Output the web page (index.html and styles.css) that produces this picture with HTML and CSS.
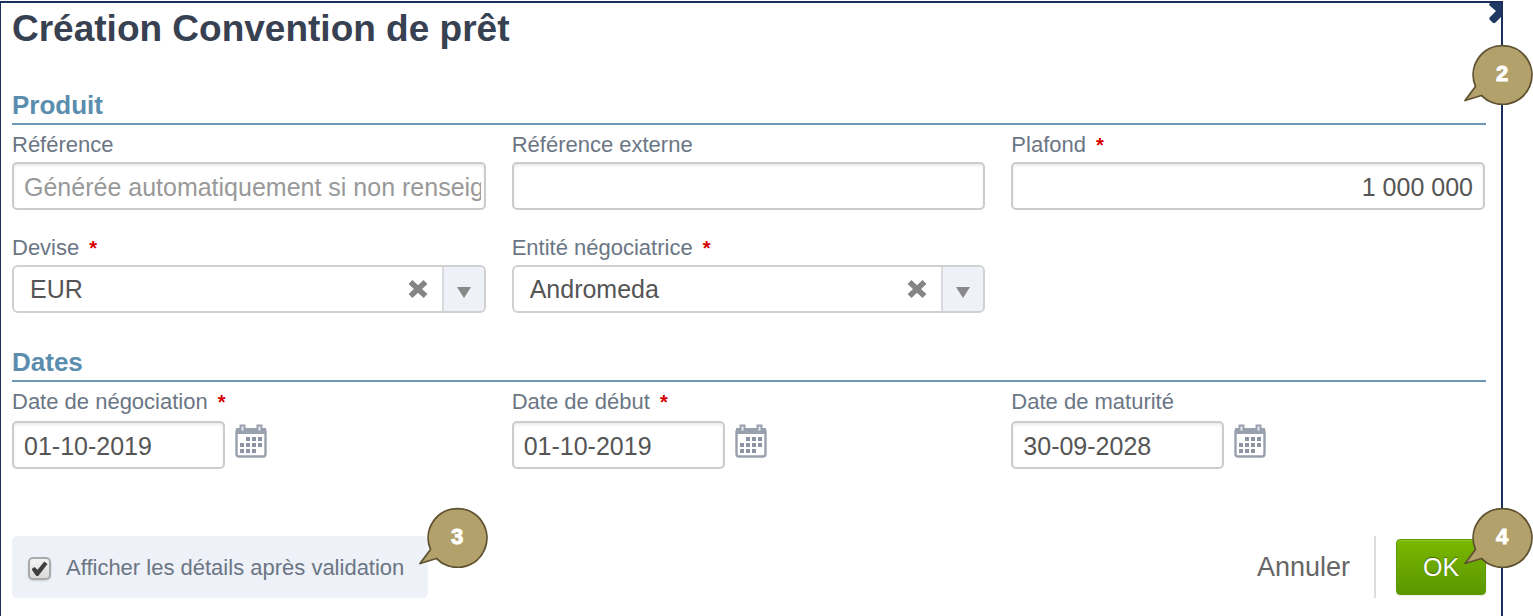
FILE: index.html
```html
<!DOCTYPE html>
<html lang="fr">
<head>
    <meta charset="UTF-8">
    <meta name="viewport" content="width=device-width, initial-scale=1.0">
    <title>Création Convention de prêt</title>
    <link rel="stylesheet" href="styles.css">
</head>
<body>

    <!-- Shared shapes -->
    <svg class="sprite" aria-hidden="true">
        <symbol id="callout" viewBox="0 0 69 62">
            <path d="M11.500 43.500 A29.400 29.400 0 1 1 17.500 52.500 L1 57.500 Z" fill="#b3a16c" stroke="#5f5230" stroke-width="1.8" stroke-linejoin="round"/>
        </symbol>
        <symbol id="calendar" viewBox="0 0 32 34">
            <rect x="1.500" y="5.500" width="29" height="27" rx="2.500" fill="#fff" stroke="#99a0ad" stroke-width="2.400"/>
            <path d="M1 4h30v6H1z" fill="#99a0ad"/>
            <path d="M4.500 0.500h6v7h-6zM21.500 0.500h6v7h-6z" fill="#99a0ad"/>
            <path d="M6.500 2.500h2v4h-2zM23.500 2.500h2v4h-2z" fill="#e6e9ef"/>
            <path d="M11 13h4v4h-4zM17 13h4v4h-4zM23 13h4v4h-4zM5 19h4v4H5zM11 19h4v4h-4zM17 19h4v4h-4zM23 19h4v4h-4zM5 25h4v4H5zM11 25h4v4h-4zM17 25h4v4h-4z" fill="#8d94a3"/>
        </symbol>
        <symbol id="clear" viewBox="0 0 20 20">
            <path d="M2.500 3 L17.500 17 M17.500 3 L2.500 17" stroke="#858585" stroke-width="5.600" fill="none"/>
        </symbol>
    </svg>

    <div class="dialog">
        <button type="button" class="dialog-close" aria-label="Fermer">
            <svg width="12" height="22" viewBox="0 0 12 22">
                <path d="M1 0 H12 V14 L6.500 19.500 Q5 21 3.500 19.500 L0.800 16.800 Q-0.300 15.500 0.800 14.200 L7 8 L0.500 2.500 Q-0.300 1 1 0 Z" fill="#1f3864"/>
            </svg>
        </button>
        <div class="callout callout-dialog">
            <svg><use href="#callout"/></svg>
            <span>2</span>
        </div>

        <h1>Création Convention de prêt</h1>

        <form>
            <section>
                <h2>Produit</h2>
                <div class="fields">
                    <div class="field">
                        <label for="reference">Référence</label>
                        <input type="text" id="reference" placeholder="Générée automatiquement si non renseignée">
                    </div>
                    <div class="field">
                        <label for="reference-externe">Référence externe</label>
                        <input type="text" id="reference-externe">
                    </div>
                    <div class="field">
                        <label for="plafond">Plafond <span class="required">*</span></label>
                        <input type="text" id="plafond" class="amount" value="1 000 000">
                    </div>
                    <div class="field">
                        <label for="devise">Devise <span class="required">*</span></label>
                        <div class="combo">
                            <select id="devise">
                                <option>EUR</option>
                            </select>
                            <button type="button" class="combo-clear" aria-label="Effacer"><svg><use href="#clear"/></svg></button>
                            <span class="combo-arrow"></span>
                        </div>
                    </div>
                    <div class="field">
                        <label for="entite">Entité négociatrice <span class="required">*</span></label>
                        <div class="combo">
                            <select id="entite">
                                <option>Andromeda</option>
                            </select>
                            <button type="button" class="combo-clear" aria-label="Effacer"><svg><use href="#clear"/></svg></button>
                            <span class="combo-arrow"></span>
                        </div>
                    </div>
                </div>
            </section>

            <section>
                <h2>Dates</h2>
                <div class="fields">
                    <div class="field">
                        <label for="date-negociation">Date de négociation <span class="required">*</span></label>
                        <div class="date">
                            <input type="text" id="date-negociation" value="01-10-2019">
                            <button type="button" aria-label="Calendrier"><svg><use href="#calendar"/></svg></button>
                        </div>
                    </div>
                    <div class="field">
                        <label for="date-debut">Date de début <span class="required">*</span></label>
                        <div class="date">
                            <input type="text" id="date-debut" value="01-10-2019">
                            <button type="button" aria-label="Calendrier"><svg><use href="#calendar"/></svg></button>
                        </div>
                    </div>
                    <div class="field">
                        <label for="date-maturite">Date de maturité</label>
                        <div class="date">
                            <input type="text" id="date-maturite" value="30-09-2028">
                            <button type="button" aria-label="Calendrier"><svg><use href="#calendar"/></svg></button>
                        </div>
                    </div>
                </div>
            </section>

            <div class="actions">
                <div class="details">
                    <input type="checkbox" id="details" checked>
                    <label for="details">Afficher les détails après validation</label>
                    <div class="callout callout-details">
                        <svg><use href="#callout"/></svg>
                        <span>3</span>
                    </div>
                </div>
                <div class="buttons">
                    <button type="button" class="cancel">Annuler</button>
                    <div class="submit">
                        <button type="submit" class="ok">OK</button>
                        <div class="callout callout-ok">
                            <svg><use href="#callout"/></svg>
                            <span>4</span>
                        </div>
                    </div>
                </div>
            </div>
        </form>
    </div>

</body>
</html>
```
FILE: styles.css
```css
* {
    box-sizing: border-box;
}
body {
    margin: 0;
    padding-top: 1px;
    background-color: #fff;
    font-family: 'Liberation Sans', Arial, Helvetica, sans-serif;
    font-size: 22px;
    color: #6b7685;
}
button, input, select {
    font-family: inherit;
}
button {
    margin: 0;
    padding: 0;
    border: none;
    background: none;
    cursor: pointer;
}
svg {
    display: block;
}
.sprite {
    position: absolute;
    width: 0;
    height: 0;
}

/* Dialog */
.dialog {
    position: relative;
    min-height: calc(100vh - 1px);
    margin-right: 30px;
    padding: 0 15px 0 11px;
    border: 2px solid #1a2f5a;
    border-left-width: 1px;
    border-bottom: none;
}
.dialog-close {
    position: absolute;
    top: 0;
    right: 0;
}
h1 {
    margin: 0 0 35px;
    font-size: 37px;
    line-height: 52px;
    color: #374151;
}
h2 {
    margin: 0;
    padding-bottom: 3px;
    border-bottom: 2px solid #6c98b5;
    font-size: 26px;
    line-height: 30px;
    color: #5b8dae;
}
section {
    margin-bottom: 34px;
}

/* Fields */
.fields {
    display: grid;
    grid-template-columns: repeat(3, 1fr);
    gap: 25px 26px;
    padding: 7px 1px 0 0;
}
.field label {
    display: block;
    margin-bottom: 4px;
    line-height: 26px;
}
.required {
    margin-left: 4px;
    font-size: 20px;
    font-weight: bold;
    color: #d60000;
}
.field input {
    display: block;
    width: 100%;
    height: 48px;
    padding: 3px 3px 0 10px;
    border: 2px solid #ccc;
    border-radius: 5px;
    background-color: #fff;
    box-shadow: inset 0 2px 3px rgba(0, 0, 0, 0.08);
    font-size: 25px;
    color: #555;
}
.field input::placeholder {
    color: #999;
}
.field .amount {
    padding-right: 10px;
    text-align: right;
}

/* Drop-downs */
.combo {
    display: flex;
    align-items: center;
    height: 48px;
    border: 2px solid #d0d0d0;
    border-radius: 6px;
    overflow: hidden;
}
.combo select {
    flex: 1;
    height: 100%;
    padding: 0 16px;
    border: none;
    background: none;
    appearance: none;
    font-size: 25px;
    color: #555;
}
.combo-clear svg {
    width: 20px;
    height: 20px;
}
.combo-arrow {
    display: flex;
    align-items: center;
    justify-content: center;
    width: 42px;
    height: 100%;
    margin-left: 14px;
    border-left: 2px solid #d8dade;
    background-color: #eef1f7;
}
.combo-arrow::after {
    content: "";
    margin-top: 6px;
    border: 7px solid transparent;
    border-top: 11px solid #888;
    border-bottom: none;
}

/* Dates */
.date {
    display: flex;
    align-items: flex-start;
    gap: 10px;
    padding-top: 2px;
}
.date input {
    width: 213px;
}
.date button {
    margin-top: 3px;
}
.date svg {
    width: 32px;
    height: 34px;
}

/* Bottom bar */
.actions {
    display: flex;
    justify-content: space-between;
    padding-top: 33px;
}
.details {
    position: relative;
    display: flex;
    align-items: center;
    gap: 15px;
    min-width: 416px;
    height: 62px;
    padding: 0 16px;
    border-radius: 5px;
    background-color: #eef1f7;
}
.details label {
    line-height: 26px;
    padding-top: 2px;
}
.details input {
    display: flex;
    align-items: center;
    justify-content: center;
    width: 23px;
    height: 23px;
    margin: 3px 0 0;
    border: 2px solid #aaa;
    border-radius: 5px;
    background: linear-gradient(#f5f5f5, #d9d9d9);
    box-shadow: 0 1px 2px rgba(0, 0, 0, 0.15);
    appearance: none;
}
.details input:checked::after {
    content: "";
    width: 16px;
    height: 15px;
    background-color: #3f3f3f;
    clip-path: polygon(0 55%, 18% 40%, 38% 58%, 80% 4%, 100% 20%, 42% 100%, 30% 100%);
}
.buttons {
    display: flex;
}
.cancel {
    padding-right: 24px;
    font-size: 27px;
    color: #666;
}
.submit {
    position: relative;
    display: flex;
    align-items: center;
    padding-left: 20px;
    border-left: 2px solid #ddd;
}
.ok {
    width: 90px;
    height: 56px;
    border: 1px solid #5c9a00;
    border-radius: 4px;
    background: linear-gradient(#7ab800, #5a9600);
    box-shadow: inset 0 1px 0 #8fc52b, 0 1px 2px rgba(0, 0, 0, 0.1);
    font-size: 25px;
    color: #fff;
    text-shadow: 0 -1px 1px rgba(0, 0, 0, 0.4);
}

/* Numbered callouts */
.callout {
    position: absolute;
    width: 69px;
    height: 62px;
    padding-left: 7px;
    font-size: 22px;
    font-weight: bold;
    line-height: 62px;
    text-align: center;
    color: #fff;
}
.callout svg {
    position: absolute;
    top: 0;
    left: 0;
    width: 69px;
    height: 62px;
}
.callout span {
    position: relative;
    -webkit-text-stroke: 1px #fff;
}
.callout-dialog {
    top: 40px;
    right: -32px;
}
.callout-details {
    top: -30px;
    right: -60px;
}
.callout-ok {
    top: -30px;
    right: -47px;
}
```
